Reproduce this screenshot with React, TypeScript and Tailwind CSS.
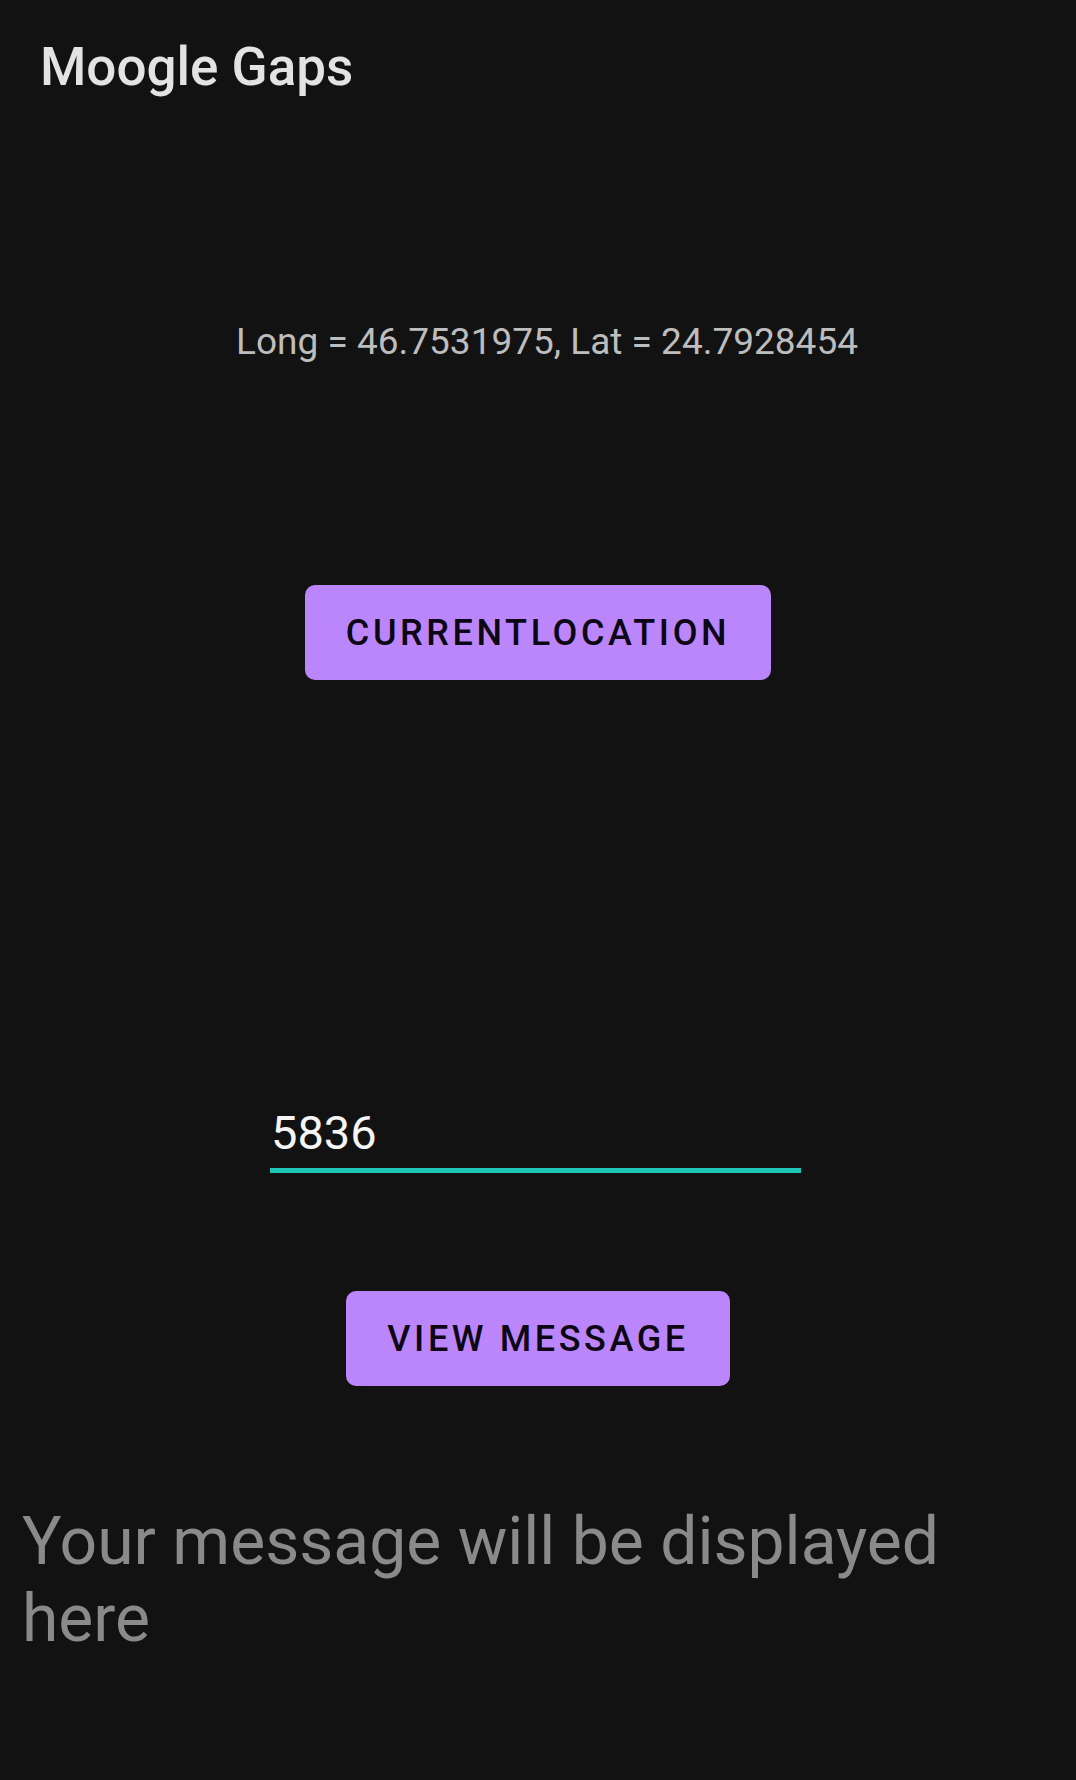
import { useState } from 'react'

function ActionButton({ label, onClick }: { label: string; onClick?: () => void }) {
  return (
    <button
      type="button"
      onClick={onClick}
      className="h-[95px] px-[41px] rounded-[10px] bg-[#bb86fc] text-[#0d0614] text-[36px] font-medium tracking-[3.6px] uppercase flex items-center justify-center"
    >
      {label}
    </button>
  )
}

export default function App() {
  const [code, setCode] = useState('5836')
  const [message] = useState('Your message will be displayed here')

  return (
    <div className="min-h-[1780px] w-full bg-[#121212] font-['Roboto','Liberation_Sans',sans-serif] flex flex-col">
      <h1 className="pt-[36px] pl-[40px] text-[53px] leading-[62px] font-medium text-[#e3e3e3]">
        Moogle Gaps
      </h1>

      <p className="mt-[222px] pl-[18px] flex justify-center text-[37px] leading-[44px] text-[#bdbdbd]">
        Long = 46.7531975, Lat = 24.7928454
      </p>

      <div className="mt-[221px] flex justify-center">
        <ActionButton label="CurrentLocation" />
      </div>

      <div className="mt-[425px] pr-[5px] flex justify-center">
        <div className="w-[531px] flex flex-col">
          <input
            value={code}
            onChange={(e) => setCode(e.target.value)}
            className="h-[56px] pl-[1px] bg-transparent outline-none text-[47px] leading-[56px] text-[#f5f5f5]"
          />
          <div className="mt-[7px] h-[5px] bg-[#1ac6b4]" />
        </div>
      </div>

      <div className="mt-[118px] flex justify-center">
        <ActionButton label="View Message" />
      </div>

      <p className="mt-[117px] px-[22px] text-[66px] leading-[77px] text-[#8a8a8a]">{message}</p>
    </div>
  )
}
